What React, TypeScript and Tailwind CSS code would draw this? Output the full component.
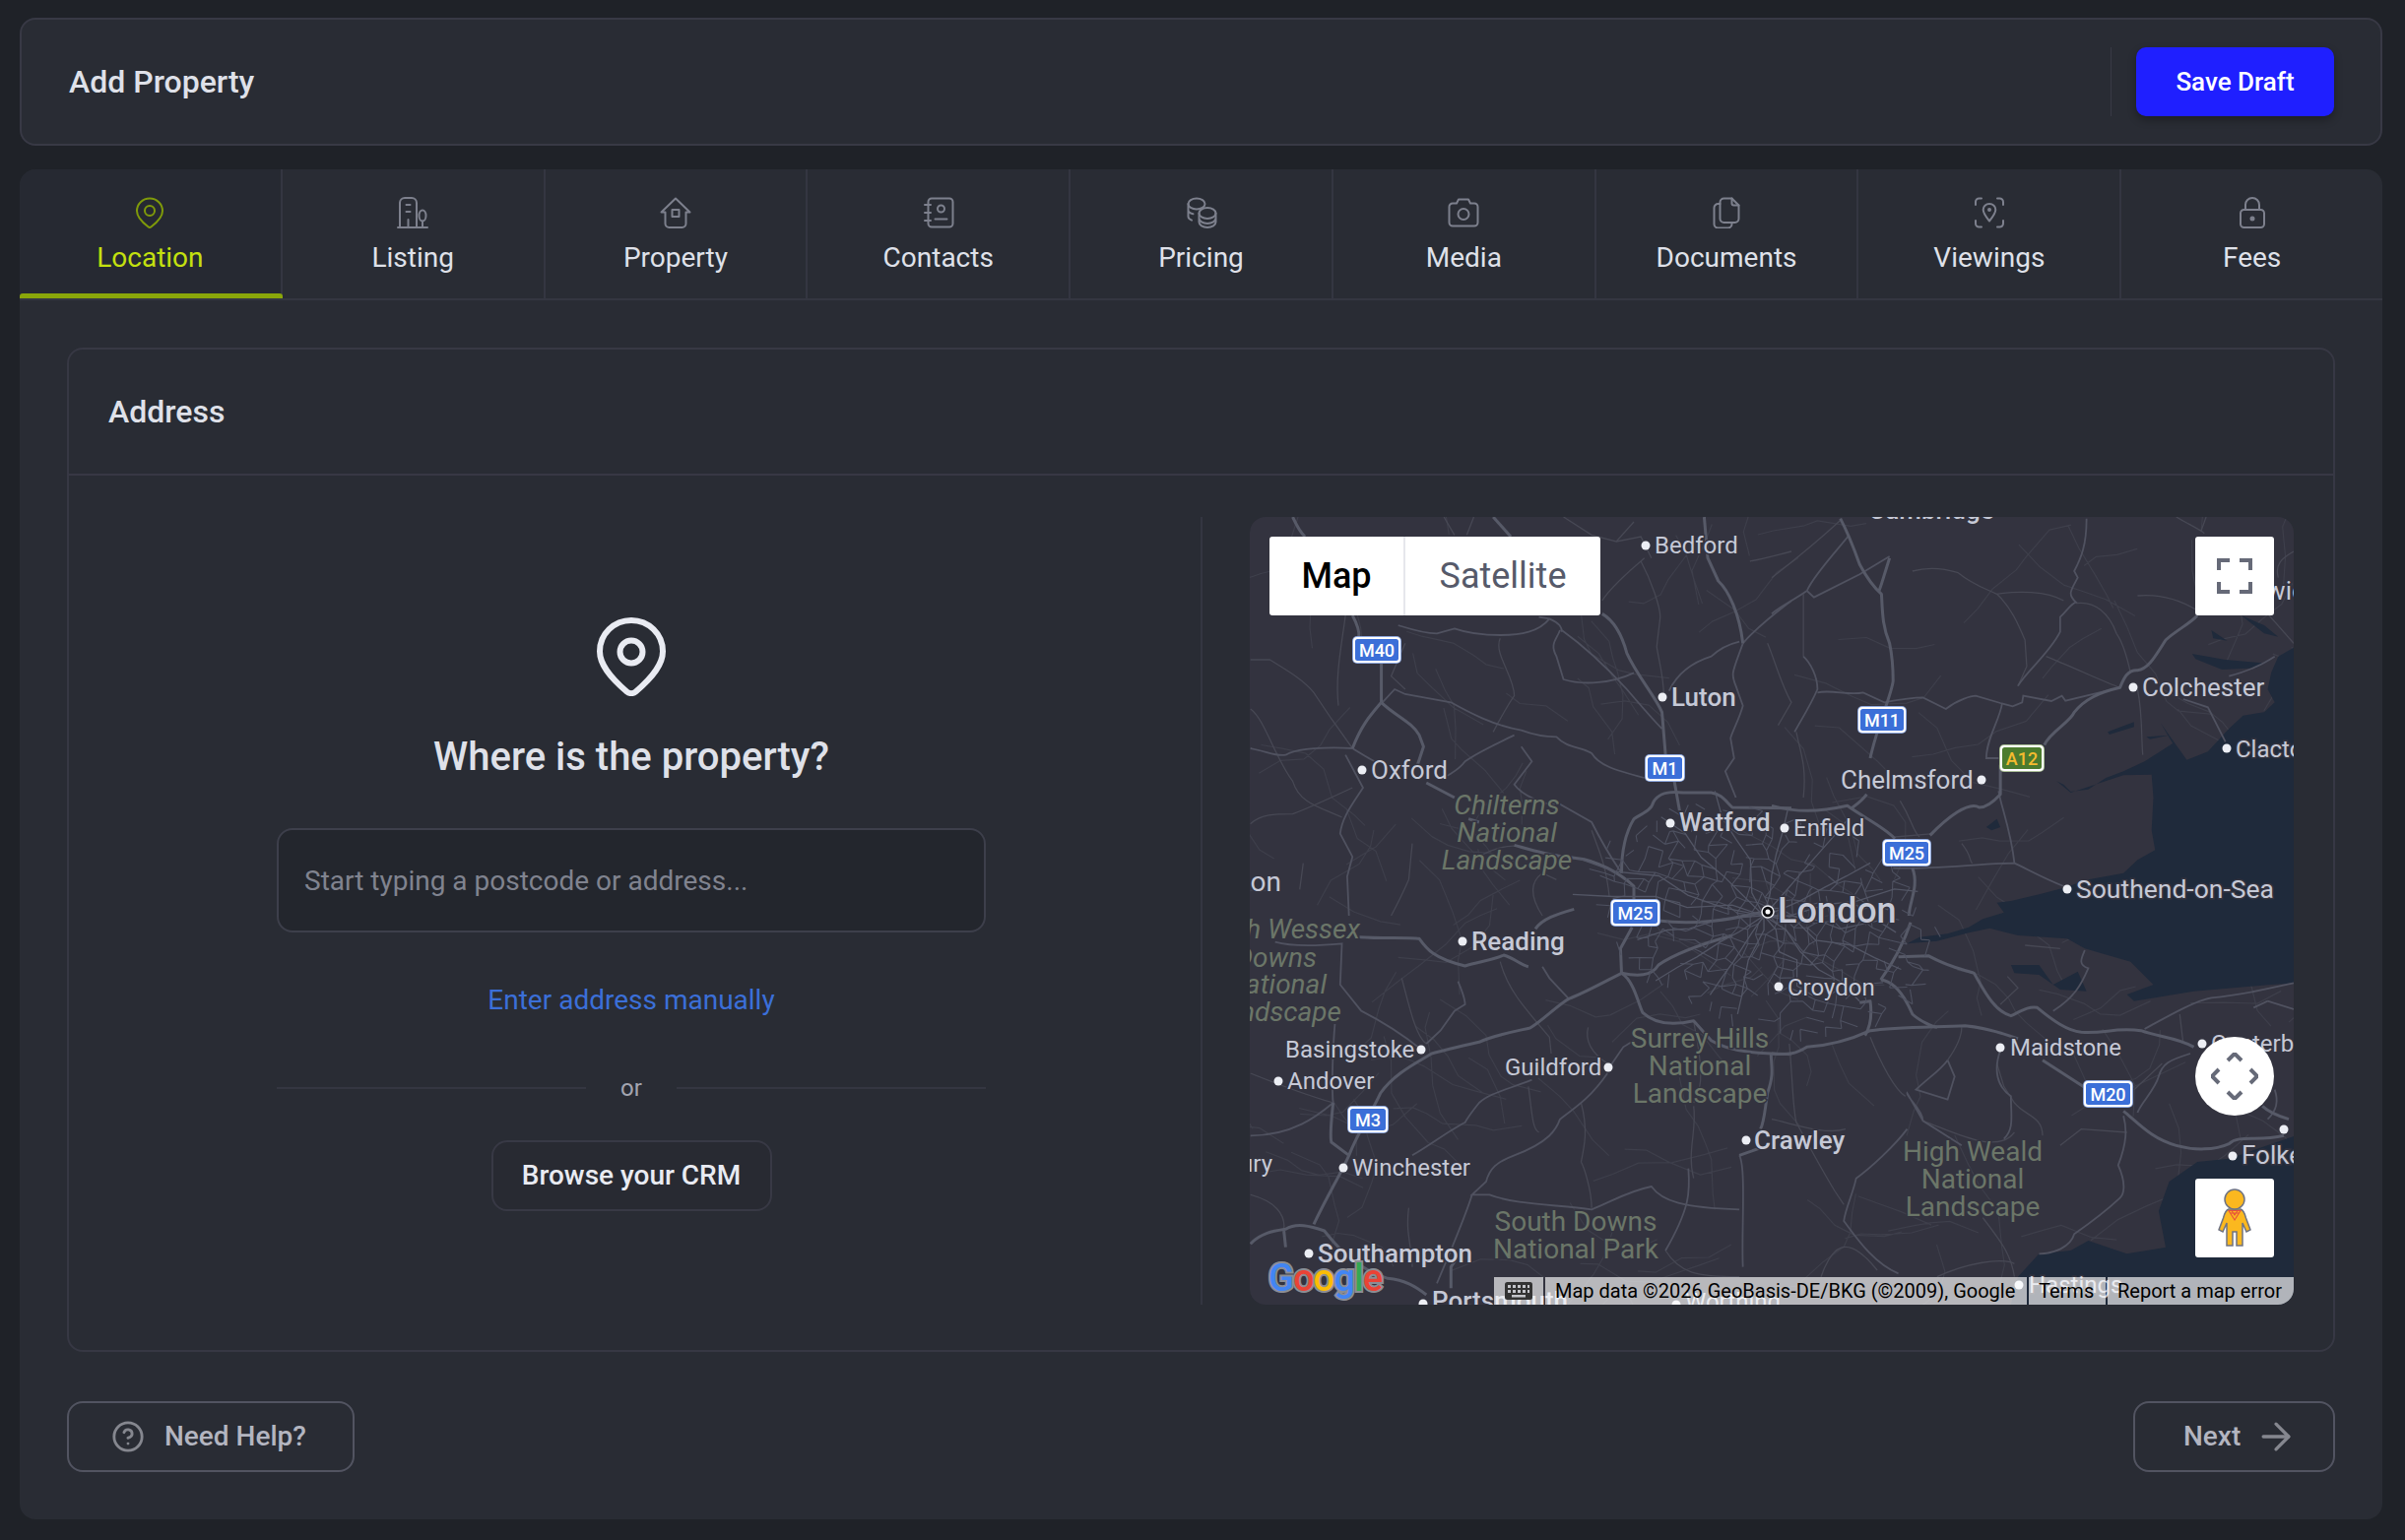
import { ArrowRight, CircleHelp } from "lucide-react";
import type { ReactNode } from "react";

// ---- tab icons ----

function Icon({ children }: { children: ReactNode }) {
	return (
		<svg viewBox="0 0 32 32" fill="none" stroke="currentColor" strokeWidth="2" strokeLinecap="round" strokeLinejoin="round" className="h-8 w-8">
			{children}
		</svg>
	);
}

const tabs: { label: string; icon: ReactNode }[] = [
	{
		label: "Location",
		icon: (
			<>
				<path d="M16 1.5c7.2 0 13 5.6 13 12.8 0 5.6-4 10.4-11.400 16a2.600 2.600 0 0 1-3.200 0C7 24.700 3 19.900 3 14.300 3 7.100 8.800 1.500 16 1.500z" />
				<circle cx="16" cy="14" r="5" />
			</>
		),
	},
	{
		label: "Listing",
		icon: (
			<>
				<path d="M3 31V6a5 5 0 0 1 5-5h7a5 5 0 0 1 5 5v25" />
				<path d="M1 31h30M9.500 8h4M9.500 15h4M11.500 23v8" />
				<ellipse cx="26" cy="19" rx="3.500" ry="5.500" />
				<path d="M26 24.500V31" />
			</>
		),
	},
	{
		label: "Property",
		icon: (
			<>
				<path d="M16 1.500 30.500 15.500H26.500V27a4 4 0 0 1-4 4H9.500a4 4 0 0 1-4-4V15.500H1.500Z" />
				<rect x="12.500" y="13" width="7" height="7" />
			</>
		),
	},
	{
		label: "Contacts",
		icon: (
			<>
				<rect x="5.500" y="1.500" width="25" height="29" rx="3.500" />
				<path d="M2 8h6M2 16h6M2 24h6M12.500 22.500h12" />
				<circle cx="18.500" cy="12" r="3.500" />
			</>
		),
	},
	{
		label: "Pricing",
		icon: (
			<>
				<ellipse cx="11" cy="7" rx="8.500" ry="5.500" />
				<path d="M2.500 7v13c0 1.500 1.300 2.700 3.500 3.700M2.500 13.500c0 1.500 1.800 3 5 3.700" />
				<ellipse cx="22" cy="16.500" rx="8.500" ry="5.500" />
				<path d="M13.500 16.500v9c0 3 3.800 5.500 8.500 5.500s8.500-2.500 8.500-5.500v-9M13.500 21.500c0 3 3.800 5.500 8.500 5.500s8.500-2.500 8.500-5.500" />
			</>
		),
	},
	{
		label: "Media",
		icon: (
			<>
				<path d="M9 6.500 11 2.500H21L23 6.500H27a3.500 3.500 0 0 1 3.500 3.500V26a3.500 3.500 0 0 1-3.500 3.500H5A3.500 3.500 0 0 1 1.500 26V10A3.500 3.500 0 0 1 5 6.500Z" />
				<circle cx="16" cy="17.500" r="5.500" />
			</>
		),
	},
	{
		label: "Documents",
		icon: (
			<>
				<path d="M13.500 1.500h8l7 7v13.500a4 4 0 0 1-4 4h-11a4 4 0 0 1-4-4v-16.500a4 4 0 0 1 4-4z" />
				<path d="M21.500 1.500v5a2 2 0 0 0 2 2h5" />
				<path d="M9.500 7H7.500a4 4 0 0 0-4 4v16.500a4 4 0 0 0 4 4h10a4 4 0 0 0 4-4V26" />
			</>
		),
	},
	{
		label: "Viewings",
		icon: (
			<>
				<path d="M2 8V5a3.500 3.500 0 0 1 3.500-3.500H8M24 1.500h2.500A3.500 3.500 0 0 1 30 5v3M30 24v3a3.500 3.500 0 0 1-3.500 3.500H24M8 30.500H5.500A3.500 3.500 0 0 1 2 27v-3" />
				<path d="M16 7c3.600 0 6.300 2.700 6.300 6 0 3-2.300 6.600-6.300 11.500C12 19.600 9.700 16 9.700 13c0-3.300 2.700-6 6.300-6z" />
				<circle cx="16" cy="13" r="1" fill="currentColor" />
			</>
		),
	},
	{
		label: "Fees",
		icon: (
			<>
				<rect x="4" y="13" width="24" height="18" rx="3.500" />
				<path d="M9 13V8a7 7 0 0 1 14 0v5" />
				<circle cx="16" cy="22" r="1.500" fill="currentColor" />
			</>
		),
	},
];

// ---- map drawing ----
// paths are traced in four groups, each with its own origin, so they can be checked against crops of the map

const roadsA = {
	major: [
		"M150 45C165 80 175 95 185 105",
		"M320 345C335 375 340 395 338 410",
		"M402 490L402 610",
		"M402 610C370 650 345 680 320 750",
		"M402 610C440 650 490 670 510 710L522 745L505 800",
		"M530 855L610 900",
		"M650 965L680 975",
		"M780 1045C830 1060 870 1075 960 1085C1010 1090 1080 1130 1120 1170L1120 1215",
		"M1030 340C1070 365 1090 420 1100 460C1130 530 1180 590 1200 640L1210 770",
		"M1235 850L1250 940",
		"M1085 1130C1085 1050 1100 1000 1120 965C1140 950 1170 940 1175 915C1190 885 1220 880 1260 885L1340 885C1370 890 1380 910 1400 930L1568 932",
		"M720 45L770 105",
		"M1320 45L1330 170L1360 240C1390 270 1420 340 1430 430",
	],
	mid: [
		"M300 770L350 870C320 920 290 960 285 1010L320 1080L305 1140L310 1260",
		"M30 750C80 760 100 775 130 770C160 750 250 745 320 750C350 770 380 790 385 790",
		"M405 610L440 570L470 585L600 610C650 640 720 680 800 695C850 715 880 715 900 715C930 750 970 745 1000 765C1020 800 1060 815 1150 840",
		"M780 710C740 730 680 760 640 790C620 820 590 830 590 835",
		"M1430 430C1400 520 1395 520 1410 560L1430 620C1420 660 1395 710 1395 720L1405 780L1380 820L1410 900",
		"M1220 575C1240 530 1280 490 1340 470C1370 440 1400 430 1420 425",
		"M1568 300C1520 340 1470 380 1430 430",
		"M910 390C900 420 880 430 900 470L920 540C980 560 1060 550 1120 520",
		"M915 390C980 440 1040 500 1100 570C1140 620 1180 670 1200 690",
		"M850 350L880 355C910 370 915 380 915 395",
		"M450 375C480 385 520 400 560 400L610 385C650 400 700 405 740 405C800 405 850 395 880 355",
		"M800 745L830 790L780 860C800 890 870 930 910 920L1000 975C1040 1060 1060 1090 1085 1130",
	],
	minor: [
		"M30 480L85 480C130 510 180 540 210 580L260 660L320 750",
		"M1140 180C1170 240 1195 320 1195 350L1185 440C1190 480 1205 530 1205 590",
		"M920 45L1000 100L1070 120L1120 60",
		"M1070 120L1140 105L1170 170",
		"M1030 300C1060 250 1120 200 1150 170",
		"M580 45L610 100M665 45L645 100",
		"M1450 180C1500 170 1530 160 1568 150",
		"M30 980C60 950 100 950 150 950C200 930 260 900 320 870",
		"M180 1100L170 1180M490 1040L480 1150C460 1200 440 1240 430 1260",
		"M740 415C720 460 780 530 780 590C760 620 730 680 720 700",
		"M30 630C70 660 100 780 150 850C170 920 230 930 290 960",
		"M300 345C290 430 270 530 280 620M470 430L430 530L470 570",
		"M650 1100C700 1060 760 1040 800 1050",
		"M900 1150L860 1130C820 1160 830 1210 860 1260",
		"M1500 430C1520 480 1540 560 1568 610L1530 680",
		"M1000 1000C1020 1060 1040 1100 1050 1200",
	],
};

const roadsB = {
	major: [
		"M195 50C215 90 230 130 250 190C270 230 290 260 312 280C315 340 315 380 335 430C345 480 345 520 345 545C340 590 300 680 280 780",
		"M335 170C320 220 310 260 305 270",
		"M270 890C250 920 225 930 225 935",
		"M0 925C70 945 130 945 215 925C260 960 320 990 350 1025",
		"M400 1115C420 1170 390 1220 390 1260",
		"M1210 345C1190 370 1150 390 1120 420C1090 470 1070 510 1040 512C1010 510 1000 540 990 565C930 580 890 600 860 640C850 670 790 700 775 740",
		"M650 800L650 890C620 925 600 930 590 930C560 910 500 960 450 1015",
	],
	mid: [
		"M100 270L120 290L250 220L335 165",
		"M100 270C60 300 20 320 0 340",
		"M100 270C120 220 200 130 220 100",
		"M345 1115C450 1120 600 1100 690 1100C730 1120 780 1150 830 1170",
		"M90 470C110 490 130 530 130 570C110 620 80 670 65 700",
		"M130 580C170 570 220 590 260 580L320 610C370 600 400 595 430 595L495 630C530 600 570 590 580 590L650 612L685 622L712 610L715 590L795 606L825 590L835 605L990 565",
		"M655 612C650 660 610 720 610 780L645 780",
		"M700 560C720 520 790 460 820 395L820 350C840 330 850 310 865 305C840 280 850 270 870 230L860 210C880 170 895 130 895 50",
		"M1300 530C1370 510 1400 490 1430 470",
		"M1170 600L1240 625L1290 730",
		"M690 1100C680 1000 650 920 645 880",
	],
	minor: [
		"M400 210C450 195 500 205 530 215C570 250 600 260 640 280C680 320 700 370 720 420L725 500L700 560",
		"M865 308C920 300 960 340 980 400C1000 430 1010 470 1020 520",
		"M640 280C700 270 780 270 830 300",
		"M1040 570C1055 650 1050 720 1055 770",
		"M1040 285C1090 280 1150 290 1210 330",
		"M1150 45C1190 70 1220 85 1230 95M1235 45L1220 90",
		"M1410 340L1484 430",
		"M1484 150C1450 170 1430 190 1440 230",
		"M0 230C60 180 120 130 200 50",
		"M90 470L90 280",
		"M70 700C80 760 100 800 90 900",
		"M365 910C400 970 400 1000 420 1020",
		"M780 470C850 500 950 550 990 565",
		"M540 1040C570 1080 560 1090 570 1100",
		"M350 1020L460 1010",
	],
};

const roadsC = {
	major: [
		"M340 95C400 100 480 95 510 100C530 130 550 160 640 183C680 170 720 165 750 150C780 160 800 180 820 185",
		"M1085 205C1030 235 970 270 935 283C900 305 860 350 825 372C770 385 720 395 680 415C620 430 580 440 545 450C500 480 440 510 400 570C370 640 340 680 310 760C290 810 250 880 210 970",
		"M1085 205L1082 130L1115 65",
		"M1085 205C1120 230 1130 290 1145 325C1170 350 1210 370 1290 350L1340 410C1400 450 1500 450 1568 452",
		"M1085 205C1130 215 1170 215 1190 180C1230 150 1300 120 1400 90",
		"M1510 450C1510 490 1520 510 1500 570C1490 640 1490 660 1480 680",
		"M1420 760L1500 730",
		"M840 70C860 40 900 25 950 10",
		"M1190 45C1300 60 1400 40 1480 20",
		"M30 1030C60 995 100 990 130 985C160 965 200 975 240 990C270 1030 320 1100 420 1135C470 1140 500 1160 530 1185",
		"M125 990L130 1040",
		"M600 1165L600 1100L625 1060",
		"M265 600C260 650 255 700 260 720L310 760",
	],
	mid: [
		"M100 110C150 125 240 120 290 115L285 240L345 320C400 350 460 390 515 437",
		"M270 360C265 420 260 540 265 600C220 640 150 700 30 700",
		"M620 230C640 280 640 300 640 300L610 320L570 380L530 420",
		"M830 530C760 560 710 570 680 600C650 640 640 660 640 660C600 680 540 730 490 760",
		"M1045 510C1000 580 960 610 910 650C900 680 880 720 780 760C730 780 710 800 700 840L660 880L710 880C780 910 900 910 1000 925C1060 900 1100 870 1170 855C1200 900 1260 920 1420 925",
		"M1275 800C1280 870 1280 920 1210 1050",
		"M1420 760C1440 800 1425 1000 1430 1100",
		"M660 880C640 950 600 1050 560 1150",
		"M935 283L880 220L860 185",
		"M1045 500L1090 430L1120 410",
	],
	minor: [
		"M820 550C830 620 830 680 850 690",
		"M990 370C980 410 1000 450 1045 480",
		"M970 600C990 680 980 730 970 780C980 800 1000 870 1000 920",
		"M30 510C100 540 200 580 265 600",
		"M460 220C480 300 500 400 530 420",
		"M740 170C760 250 800 300 880 400L885 450",
		"M30 880C100 900 130 940 125 985",
		"M480 920C470 1000 490 1040 490 1100",
		"M1290 610C1300 680 1270 750 1290 830",
		"M1290 350C1300 420 1330 540 1290 600",
		"M1210 1050C1250 1120 1300 1130 1420 1130",
	],
};

const roadsD = {
	major: [
		"M0 450C50 455 70 450 100 430C170 425 230 405 280 380C340 370 420 370 550 365C600 370 650 385 700 405",
		"M265 395C280 370 285 330 280 290L250 295",
		"M310 225C350 230 380 280 400 330C420 350 460 370 470 370",
		"M310 225C340 180 370 130 395 50",
		"M360 155L445 152C510 190 550 195 575 205C600 250 630 320 680 335C710 320 730 305 755 310C800 350 840 380 880 385C950 390 970 370 1050 380C1100 400 1150 400 1200 430",
		"M770 470L900 560",
		"M1000 625C1040 660 1080 710 1150 730C1200 745 1260 745 1300 725C1330 695 1380 720 1456 700",
		"M1395 610C1410 625 1440 640 1470 650",
	],
	mid: [
		"M1060 375C1120 340 1200 290 1250 280C1350 270 1420 250 1484 235",
		"M1410 290L1484 315M1410 290L1370 310",
		"M650 440C630 500 640 550 680 580C680 640 690 680 660 710",
		"M500 470L520 520L500 590L410 560C450 520 480 500 500 470",
		"M385 680C350 730 280 800 240 830C230 880 210 920 205 960C240 1010 290 1090 360 1120",
		"M430 655C430 620 380 580 385 570L430 655L540 730",
		"M1000 640C1010 680 1010 720 985 790C1010 850 1000 880 990 890C950 930 900 970 860 1000C850 1040 800 1060 760 1060",
		"M1190 450C1130 470 1110 480 1100 520C1090 560 1050 600 1040 630",
		"M890 135C880 160 870 180 900 190C880 240 860 280 800 320",
		"M1410 650C1440 620 1440 590 1430 560",
	],
	minor: [
		"M0 650C50 660 150 700 210 680",
		"M50 420C60 540 60 620 70 660C90 700 140 800 180 870L205 910",
		"M280 400C310 480 350 560 380 580",
		"M540 370C540 400 520 440 500 470",
		"M720 120L820 130M670 215L700 250L650 300",
		"M640 480L660 550L690 600C720 640 770 640 770 700",
		"M430 655C520 690 640 760 690 690",
		"M600 950C650 1020 680 1060 690 1130",
		"M140 1130C170 1040 210 990 300 1110",
		"M820 730L880 680L1010 690",
		"M1160 330L1170 420M1110 480L1030 560",
		"M1210 500L1290 530L1300 640",
		"M470 1130C550 1090 650 1070 690 1090",
	],
};

function seeded(i: number) {
	const v = Math.sin(i * 127.1 + 11.7) * 43758.5453;
	return v - Math.floor(v);
}

// the dense street web around central London: a jittered, slightly turned grid
// that thins out towards the edge, with a few radial roads on top
function londonWeb() {
	const cx = 1792;
	const cy = 930;
	const nx = 15;
	const ny = 10;
	const node = (ix: number, iy: number) => {
		const n = (ix + 20) * 53 + iy + 20;
		const gx = ix * 12 + (seeded(n) - 0.5) * 10;
		const gy = iy * 11 + (seeded(n + 900) - 0.5) * 10;
		return [cx + gx * 0.96 - gy * 0.28, cy + gx * 0.28 + gy * 0.96];
	};
	let mesh = "";
	for (let ix = -nx; ix <= nx; ix++) {
		for (let iy = -ny; iy <= ny; iy++) {
			const r = Math.hypot(ix / nx, iy / ny);
			if (r > 1) continue;
			const [x, y] = node(ix, iy);
			const keep = 0.95 - 0.6 * r;
			const salt = (ix + 30) * 71 + iy;
			if (seeded(salt) < keep) {
				const [a, b] = node(ix + 1, iy);
				mesh += `M${x.toFixed(1)} ${y.toFixed(1)}L${a.toFixed(1)} ${b.toFixed(1)}`;
			}
			if (seeded(salt + 500) < keep) {
				const [a, b] = node(ix, iy + 1);
				mesh += `M${x.toFixed(1)} ${y.toFixed(1)}L${a.toFixed(1)} ${b.toFixed(1)}`;
			}
		}
	}
	const spokes: string[] = [];
	for (let s = 0; s < 16; s++) {
		const a = (s / 16) * Math.PI * 2 + seeded(s) * 0.2;
		const reach = 95 + seeded(s + 40) * 75;
		let d = `M${cx} ${cy}`;
		for (let k = 1; k <= 5; k++) {
			const r = (reach * k) / 5;
			const j = (seeded(s * 7 + k) - 0.5) * 12;
			d += `L${(cx + Math.cos(a) * r * 1.2 + j).toFixed(1)} ${(cy + Math.sin(a) * r * 0.85 - j).toFixed(1)}`;
		}
		spokes.push(d);
	}
	return { mesh, spokes };
}

// faint country lanes, drawn under the water and the named roads
function lanes() {
	let d = "";
	for (let i = 0; i < 150; i++) {
		let x = 1270 + seeded(i + 3000) * 1060;
		let y = 525 + seeded(i + 4000) * 800;
		let a = seeded(i + 5000) * Math.PI * 2;
		d += `M${x.toFixed(1)} ${y.toFixed(1)}`;
		const steps = 3 + Math.floor(seeded(i + 6000) * 4);
		for (let k = 0; k < steps; k++) {
			a += (seeded(i * 13 + k) - 0.5) * 1.3;
			const len = 14 + seeded(i * 17 + k) * 22;
			x += Math.cos(a) * len;
			y += Math.sin(a) * len;
			d += `L${x.toFixed(1)} ${y.toFixed(1)}`;
		}
	}
	return d;
}

const WEB = londonWeb();
const LANES = lanes();

function Roads({ set }: { set: { major: string[]; mid: string[]; minor: string[] } }) {
	return (
		<>
			{set.minor.map((d) => (
				<path key={d} d={d} fill="none" stroke="#474854" strokeWidth="1.3" vectorEffect="non-scaling-stroke" />
			))}
			{set.mid.map((d) => (
				<path key={d} d={d} fill="none" stroke="#505260" strokeWidth="1.8" vectorEffect="non-scaling-stroke" />
			))}
			{set.major.map((d) => (
				<path key={d} d={d} fill="none" stroke="#575a68" strokeWidth="3" strokeLinejoin="round" vectorEffect="non-scaling-stroke" />
			))}
		</>
	);
}

type MapLabel = {
	t: string;
	x: number;
	y: number;
	s?: number;
	w?: number;
	a?: "start" | "middle" | "end";
	c?: string;
	i?: boolean;
};

const GREEN = "#6b7668";

const labels: MapLabel[] = [
	{ t: "Cambridge", x: 1962, y: 527, s: 26, w: 500, a: "middle" },
	{ t: "Bedford", x: 1681, y: 562, s: 24 },
	{ t: "Ipswich", x: 2267, y: 609, s: 26 },
	{ t: "Colchester", x: 2176, y: 707, s: 26 },
	{ t: "Luton", x: 1698, y: 717, s: 26, w: 500 },
	{ t: "Clacton", x: 2271, y: 769, s: 24 },
	{ t: "Oxford", x: 1393, y: 791, s: 26 },
	{ t: "Chelmsford", x: 1870, y: 801, s: 26 },
	{ t: "Watford", x: 1706, y: 844, s: 26, w: 500 },
	{ t: "Enfield", x: 1822, y: 849, s: 24 },
	{ t: "Swindon", x: 1302, y: 905, s: 28, a: "end" },
	{ t: "Southend-on-Sea", x: 2109, y: 912, s: 26.5 },
	{ t: "London", x: 1806, y: 937, s: 36, w: 500 },
	{ t: "Reading", x: 1495, y: 965, s: 26, w: 500 },
	{ t: "Croydon", x: 1816, y: 1011, s: 24 },
	{ t: "Basingstoke", x: 1306, y: 1074, s: 24 },
	{ t: "Maidstone", x: 2042, y: 1072, s: 24 },
	{ t: "Canterbury", x: 2246, y: 1068, s: 24 },
	{ t: "Guildford", x: 1529, y: 1092, s: 24 },
	{ t: "Andover", x: 1308, y: 1106, s: 24 },
	{ t: "Crawley", x: 1782, y: 1167, s: 26, w: 500 },
	{ t: "Folkestone", x: 2277, y: 1182, s: 26 },
	{ t: "Salisbury", x: 1293, y: 1190, s: 24, a: "end" },
	{ t: "Winchester", x: 1374, y: 1194, s: 24 },
	{ t: "Southampton", x: 1339, y: 1282, s: 26, w: 500 },
	{ t: "Hastings", x: 2061, y: 1313, s: 24 },
	{ t: "Portsmouth", x: 1455, y: 1330, s: 26, w: 500 },
	{ t: "Worthing", x: 1712, y: 1330, s: 24 },
	{ t: "Chilterns", x: 1531, y: 827, s: 28, a: "middle", c: GREEN, i: true },
	{ t: "National", x: 1531, y: 855, s: 28, a: "middle", c: GREEN, i: true },
	{ t: "Landscape", x: 1531, y: 883, s: 28, a: "middle", c: GREEN, i: true },
	{ t: "North Wessex", x: 1382, y: 953, s: 28, a: "end", c: GREEN, i: true },
	{ t: "Downs", x: 1338, y: 982, s: 28, a: "end", c: GREEN, i: true },
	{ t: "National", x: 1348, y: 1009, s: 28, a: "end", c: GREEN, i: true },
	{ t: "Landscape", x: 1363, y: 1037, s: 28, a: "end", c: GREEN, i: true },
	{ t: "Surrey Hills", x: 1727, y: 1064, s: 28, a: "middle", c: GREEN },
	{ t: "National", x: 1727, y: 1092, s: 28, a: "middle", c: GREEN },
	{ t: "Landscape", x: 1727, y: 1120, s: 28, a: "middle", c: GREEN },
	{ t: "High Weald", x: 2004, y: 1179, s: 28, a: "middle", c: GREEN },
	{ t: "National", x: 2004, y: 1207, s: 28, a: "middle", c: GREEN },
	{ t: "Landscape", x: 2004, y: 1235, s: 28, a: "middle", c: GREEN },
	{ t: "South Downs", x: 1601, y: 1250, s: 28, a: "middle", c: GREEN },
	{ t: "National Park", x: 1601, y: 1278, s: 28, a: "middle", c: GREEN },
];

const dots: [number, number][] = [
	[1672, 554], [2167, 698], [1689, 708], [2262, 760], [1384, 782], [2013, 792], [1697, 836], [1813, 841],
	[2100, 903], [1486, 956], [1807, 1002], [1444, 1066], [2032, 1064], [2237, 1060], [1634, 1084], [1299, 1098],
	[1774, 1158], [2320, 1147], [2268, 1174], [1365, 1186], [1330, 1273], [2051, 1305], [1446, 1324], [1703, 1325],
];

const shields: { t: string; x: number; y: number; w: number; green?: boolean }[] = [
	{ t: "M40", x: 1374, y: 646, w: 50 },
	{ t: "M1", x: 1671, y: 766, w: 41 },
	{ t: "M25", x: 1636, y: 913, w: 51 },
	{ t: "M11", x: 1887, y: 717, w: 50 },
	{ t: "A12", x: 2031, y: 756, w: 46, green: true },
	{ t: "M25", x: 1912, y: 852, w: 50 },
	{ t: "M3", x: 1369, y: 1123, w: 42 },
	{ t: "M20", x: 2116, y: 1097, w: 51 },
];

function MapArt() {
	return (
		<svg viewBox="1270 525 1060 800" className="absolute inset-0 h-full w-full font-['Roboto',sans-serif]">
			<rect x="1270" y="525" width="1060" height="800" fill="#33333f" />
			<path d={LANES} fill="none" stroke="#3e3f4b" strokeWidth="1.2" strokeLinejoin="round" />
			<g transform="translate(1800 510) scale(0.35714 0.33333)" fill="#1f2a3b">
				<path d="M1490 440L1440 470L1420 520L1410 570L1430 610L1400 640L1340 650L1300 690L1240 760L1180 785L1150 740L1105 672L1140 735L1060 790L1000 820L950 840L900 875L850 882L830 860L810 850L850 885L1000 832L1080 830L1085 900L1080 1000L1090 1060L1040 1090L1000 1130L900 1150L830 1175L760 1195L680 1215L640 1220L660 1250L600 1270L560 1295L500 1315L420 1325L385 1345L470 1337L560 1312L620 1298L700 1320L840 1330L890 1360L1020 1400L1085 1470L1010 1500L1030 1520L1200 1490L1420 1470L1490 1465Z" />
				<path d="M1490 1930L1300 2000L1210 2010L1130 2070L1100 2160L1120 2270L1010 2290L900 2250L850 2280L760 2290L700 2360L680 2445H1490Z" />
				<path d="M680 1410L760 1410L800 1470L870 1430L895 1490L820 1485L760 1440L690 1435Z" />
				<path d="M1195 462L1290 480L1395 490L1430 470L1380 505L1280 510L1205 478Z" />
				<path d="M1250 390L1295 422L1255 415Z" />
				<path d="M1335 345L1400 375L1440 410L1400 400Z" />
				<path d="M955 700L1030 670L1030 685L960 708ZM1065 715L1130 710L1075 722Z" />
				<path d="M610 990L640 965L650 990L625 1000Z" />
			</g>
			<g transform="translate(1260 510) scale(0.35714 0.33333)">
				<Roads set={roadsA} />
			</g>
			<g transform="translate(1800 510) scale(0.35714 0.33333)">
				<Roads set={roadsB} />
			</g>
			<g transform="translate(1260 920) scale(0.35714 0.33333)">
				<Roads set={roadsC} />
			</g>
			<g transform="translate(1800 920) scale(0.35714 0.33333)">
				<Roads set={roadsD} />
			</g>
			<path d={WEB.mesh} fill="none" stroke="#4e5160" strokeWidth="1.1" />
			{WEB.spokes.map((d) => (
				<path key={d} d={d} fill="none" stroke="#535665" strokeWidth="1.3" />
			))}
			{labels.map((l) => (
				<text
					key={`${l.t}${l.x}`}
					x={l.x}
					y={l.y}
					fontSize={l.s}
					fontWeight={l.w ?? 400}
					fontStyle={l.i ? "italic" : "normal"}
					textAnchor={l.a ?? "start"}
					fill={l.c ?? "#c6c9d6"}
					stroke="#33333f"
					strokeWidth="3"
					paintOrder="stroke"
				>
					{l.t}
				</text>
			))}
			{dots.map(([x, y]) => (
				<circle key={`${x}-${y}`} cx={x} cy={y} r="4.500" fill="#eceef4" />
			))}
			<circle cx="1796" cy="926" r="6" fill="#0c0c10" stroke="#e8e9ee" strokeWidth="1.500" />
			<circle cx="1796" cy="926" r="2.500" fill="#fff" />
			{shields.map((m) => (
				<g key={`${m.t}${m.x}`}>
					<rect x={m.x} y={m.y} width={m.w} height="28" rx="5" fill={m.green ? "#a9bd95" : "#8ea8de"} />
					<rect x={m.x + 1} y={m.y + 1} width={m.w - 2} height="26" rx="4" fill="#fff" />
					<rect x={m.x + 3} y={m.y + 3} width={m.w - 6} height="22" rx="2.500" fill={m.green ? "#4b7b2e" : "#3b6fd8"} />
					<text x={m.x + m.w / 2} y={m.y + 20.500} fontSize="18" fontWeight="500" textAnchor="middle" fill={m.green ? "#f6bb2f" : "#fff"}>
						{m.t}
					</text>
				</g>
			))}
			<text x="1289" y="1311" fontSize="38" fontWeight="500" stroke="#8b8d94" strokeWidth="4" paintOrder="stroke" textLength="116">
				<tspan fill="#4285f4">G</tspan>
				<tspan fill="#ea4335">o</tspan>
				<tspan fill="#fbbc05">o</tspan>
				<tspan fill="#4285f4">g</tspan>
				<tspan fill="#34a853">l</tspan>
				<tspan fill="#ea4335">e</tspan>
			</text>
		</svg>
	);
}

function GoogleMap() {
	return (
		<div className="relative ml-12 h-[800px] w-[1060px] overflow-hidden rounded-2xl">
			<MapArt />
			<div className="absolute left-5 top-5 flex h-20 w-[336px] overflow-hidden rounded-[3px] bg-white text-[36px]">
				<button className="w-[138px] border-r-2 border-[#e6e7ec] font-medium text-black">Map</button>
				<button className="flex-1 text-[#565a6a]">Satellite</button>
			</div>
			<button className="absolute right-5 top-5 flex h-20 w-20 items-center justify-center rounded-[3px] bg-white">
				<svg viewBox="0 0 36 36" fill="none" stroke="#666a78" strokeWidth="4" className="h-9 w-9">
					<path d="M2 12V2h11M23 2h11v10M34 24v10H23M13 34H2V24" />
				</svg>
			</button>
			<button className="absolute right-5 top-[528px] flex h-20 w-20 items-center justify-center rounded-full bg-white">
				<svg viewBox="0 0 48 48" fill="none" stroke="#666a78" strokeWidth="4" className="h-12 w-12">
					<path d="M17 8l7-7 7 7M17 40l7 7 7-7M8 17l-7 7 7 7M40 17l7 7-7 7" />
				</svg>
			</button>
			<button className="absolute right-5 top-[672px] flex h-20 w-20 items-center justify-center rounded-[3px] bg-white">
				<svg viewBox="0 0 34 60" className="h-[60px] w-[34px]">
					<path
						d="M11 21H23C26 22 27.500 26 28.500 30L33 42L29 44L25 35V58H19V44H15V58H9V35L5 44L1 42L5.500 30C6.500 26 8 22 11 21Z"
						fill="#fbb81f"
						stroke="#6f7382"
						strokeWidth="1.500"
					/>
					<circle cx="17" cy="11" r="10" fill="#fbb81f" stroke="#6f7382" strokeWidth="1.500" />
					<path d="M11 22.500H23L17 32ZM14 22.500L17 27L20 22.500M12.500 25H21.500" fill="none" stroke="#e8513a" strokeWidth="1.100" />
				</svg>
			</button>
			<div className="absolute bottom-0 right-0 flex h-7 text-[20px] leading-7 text-black">
				<div className="mr-0.5 flex w-[50px] items-center justify-center bg-white/65">
					<svg viewBox="0 0 28 18" className="h-[18px] w-7">
						<rect width="28" height="18" rx="2.500" fill="#333" />
						<path d="M3 3h3v3H3zM8 3h3v3H8zM13 3h3v3h-3zM18 3h3v3h-3zM23 3h2v3h-2zM3 8h3v3H3zM8 8h3v3H8zM13 8h3v3h-3zM18 8h3v3h-3zM23 8h2v3h-2zM7 13h14v2.500H7z" fill="#c4c5ca" />
					</svg>
				</div>
				<div className="mr-0.5 w-[489px] bg-white/65 pl-2.5">Map data ©2026 GeoBasis-DE/BKG (©2009), Google</div>
				<div className="mr-0.5 w-[78px] bg-white/65 pl-2.5">Terms</div>
				<div className="w-[189px] bg-white/65 pl-2.5">Report a map error</div>
			</div>
		</div>
	);
}

export default function App() {
	return (
		<div className="flex h-[1564px] w-[2442px] flex-col gap-6 overflow-hidden bg-[#1f2228] pl-5 pr-[23px] pt-[18px] font-['Roboto',sans-serif] text-[28px] text-[#e3e5ec]">
			<header className="flex h-[130px] items-center justify-between rounded-2xl border-2 border-[#383945] bg-[#292c34] pl-12 pr-[47px]">
				<h1 className="text-[32px] font-medium text-[#dfe1e9]">Add Property</h1>
				<div className="flex h-[70px] items-center gap-[25px]">
					<div className="h-full w-px bg-[#383945]" />
					<button className="h-full w-[201px] rounded-[10px] bg-[#1f1fff] text-[26px] font-medium text-white shadow-[0_4px_8px_rgba(0,0,0,0.3)]">
						Save Draft
					</button>
				</div>
			</header>

			<main className="flex h-[1371px] flex-col overflow-hidden rounded-2xl bg-[#292c34]">
				<nav className="flex h-[133px] border-b-2 border-[#343641]">
					{tabs.map((tab, i) => (
						<div
							key={tab.label}
							className={
								i === 0
									? "relative flex flex-1 flex-col items-center border-r-2 border-[#343641] bg-[#262932] pt-7 text-[#c4e00f]"
									: "flex flex-1 flex-col items-center border-r-2 border-[#343641] pt-7 text-[#dfe1e9] last:border-r-0"
							}
						>
							<span className={i === 0 ? "text-[#7f9a0a]" : "text-[#7d808d]"}>
								<Icon>{tab.icon}</Icon>
							</span>
							<span className="mt-3 leading-9">{tab.label}</span>
							{i === 0 && <span className="absolute -right-0.5 bottom-0 left-0 h-[5px] rounded-t-[3px] bg-[#8aa60a]" />}
						</div>
					))}
				</nav>

				<section className="mx-12 mt-12 h-[1020px] rounded-2xl border-2 border-[#373844]">
					<h2 className="flex h-[128px] items-center border-b-2 border-[#373844] pl-10 text-[32px] font-medium text-[#dfe1e9]">Address</h2>
					<div className="flex pt-[42px]">
						<div className="flex h-[800px] w-[1151px] flex-col items-center border-r-2 border-[#343641] pr-[7px] pt-[102px]">
							<svg viewBox="0 0 70 80" fill="none" stroke="#e9ebf2" strokeWidth="6" className="h-20 w-[70px]">
								<path d="M35 3C52.700 3 67 17 67 34.500C67 47.500 57.500 60 39.500 75.500A7 7 0 0 1 30.500 75.500C12.500 60 3 47.500 3 34.500C3 17 17.300 3 35 3Z" />
								<circle cx="35" cy="35" r="11.500" />
							</svg>
							<h3 className="mt-[39px] text-[40px] font-medium leading-[46px] text-[#dfe1e9]">Where is the property?</h3>
							<input
								placeholder="Start typing a postcode or address..."
								className="mt-[49px] h-[106px] w-[720px] rounded-2xl border-2 border-[#3d3f4b] bg-[#23262d] px-[26px] text-[28px] outline-none placeholder:text-[#80838f]"
							/>
							<a className="mt-[51px] leading-9 text-[#3b6fd8]">Enter address manually</a>
							<div className="mt-[57px] flex w-[720px] items-center text-[24px] text-[#a3a5b0]">
								<div className="h-0.5 flex-1 bg-[#343641]" />
								<span className="w-[92px] text-center leading-7">or</span>
								<div className="h-0.5 flex-1 bg-[#343641]" />
							</div>
							<button className="mt-[39px] h-[72px] w-[285px] rounded-2xl border-2 border-[#383945] bg-[#282a32] font-medium text-[#e9ebf2]">
								Browse your CRM
							</button>
						</div>
						<GoogleMap />
					</div>
				</section>

				<footer className="mx-12 mt-[50px] flex justify-between">
					<button className="flex h-[72px] w-[292px] items-center gap-[20px] rounded-2xl border-2 border-[#525461] pl-[43px] font-medium text-[#b3b5c0]">
						<CircleHelp className="h-[34px] w-[34px] text-[#85878f]" strokeWidth={2} />
						Need Help?
					</button>
					<button className="flex h-[72px] w-[205px] items-center gap-3.5 rounded-2xl border-2 border-[#525461] pl-[49px] font-medium text-[#b3b5c0]">
						Next
						<ArrowRight className="h-[44px] w-[44px] text-[#85878f]" strokeWidth={1.8} />
					</button>
				</footer>
			</main>
		</div>
	);
}
